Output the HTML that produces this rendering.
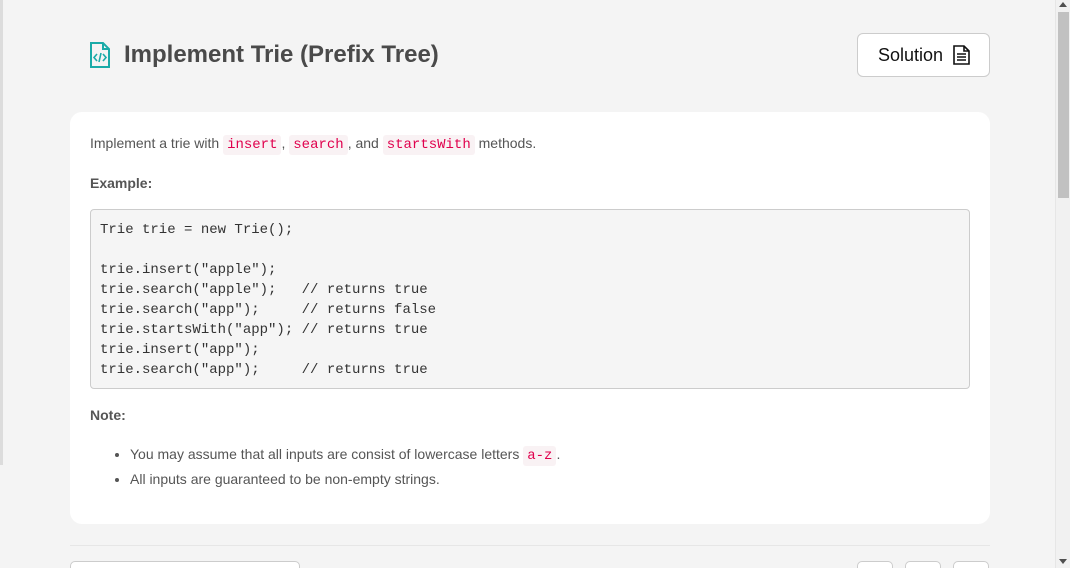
<!DOCTYPE html>
<html><head><style>
*{box-sizing:border-box;margin:0;padding:0}
html,body{width:1070px;height:568px;overflow:hidden;background:#f4f4f4;font-family:"Liberation Sans",sans-serif;position:relative}
.lb{position:absolute;left:0;top:0;width:3px;height:465px;background:#dcdcdc}
.sb{position:absolute;right:0;top:0;width:15px;height:568px;background:#f1f1f1;border-left:1px solid #e6e6e6}
.th{position:absolute;left:2px;top:12px;width:11px;height:186px;background:#c1c1c1}
.up{position:absolute;left:3px;top:2px;width:0;height:0;border:4px solid transparent;border-bottom:5px solid #505050;border-top:0}
.dn{position:absolute;left:3px;bottom:4px;width:0;height:0;border:4px solid transparent;border-top:5px solid #505050;border-bottom:0}
h1{position:absolute;left:124px;top:41px;font-size:24px;font-weight:bold;color:#4a4a4a}
.ic{position:absolute;left:89px;top:42px}
.btn{position:absolute;left:857px;top:33px;width:133px;height:44px;background:#fff;border:1px solid #ccc;border-radius:6px;font-size:18px;color:#111;padding:11px 0 0 20px}
.btn svg{position:absolute;left:95px;top:11px}
.card{position:absolute;left:70px;top:112px;width:920px;height:412px;background:#fff;border-radius:12px;color:#555;font-size:14px}
code{font-family:"Liberation Mono",monospace;color:#e0004d;background:#f9f2f4;padding:2px 4px;border-radius:3px;font-size:14px;line-height:1}
p{position:absolute;left:20px}
pre{position:absolute;left:20px;top:97px;width:880px;height:180px;background:#f5f5f5;border:1px solid #ccc;border-radius:4px;padding:10px 10px 0 9px;font-family:"Liberation Mono",monospace;font-size:14px;line-height:20px;color:#333}
ul{position:absolute;left:60px;top:330px}
li{height:25px;line-height:24px}
.sep{position:absolute;left:70px;top:545px;width:920px;height:1px;background:#e6e6e6}
.bx{position:absolute;top:561px;height:20px;background:#fff;border:1px solid #ccc;border-radius:5px}
</style></head><body>
<div class="lb"></div>
<svg class="ic" width="22" height="26" viewBox="0 0 22 26" fill="none" stroke="#1aaba8" stroke-width="2"><path d="M2 1h12l6 6v18H2z"/><path d="M14 1v6h6"/><path d="M8 12l-3 3.5 3 3.5M14 12l3 3.5-3 3.5M12 11l-2 9" stroke-width="1.6"/></svg>
<h1>Implement Trie (Prefix Tree)</h1>
<div class="btn">Solution<svg width="17" height="20" viewBox="0 0 17 20" fill="none" stroke="#111" stroke-width="1.6"><path d="M1 1h10l5 5v13H1z"/><path d="M11 1v5h5"/><path d="M4 9h9M4 12h9M4 15h9"/></svg></div>
<div class="card">
<p style="top:23px">Implement a trie with <code>insert</code>, <code>search</code>, and <code>startsWith</code> methods.</p>
<p style="top:63px;font-weight:bold">Example:</p>
<pre>Trie trie = new Trie();

trie.insert("apple");
trie.search("apple");   // returns true
trie.search("app");     // returns false
trie.startsWith("app"); // returns true
trie.insert("app");
trie.search("app");     // returns true</pre>
<p style="top:295px;font-weight:bold">Note:</p>
<ul><li>You may assume that all inputs are consist of lowercase letters <code>a-z</code>.</li><li>All inputs are guaranteed to be non-empty strings.</li></ul>
</div>
<div class="sep"></div>
<div class="bx" style="left:70px;width:230px"></div>
<div class="bx" style="left:857px;width:36px"></div>
<div class="bx" style="left:905px;width:36px"></div>
<div class="bx" style="left:953px;width:36px"></div>
<div class="sb"><div class="up"></div><div class="th"></div><div class="dn"></div></div>
</body></html>
